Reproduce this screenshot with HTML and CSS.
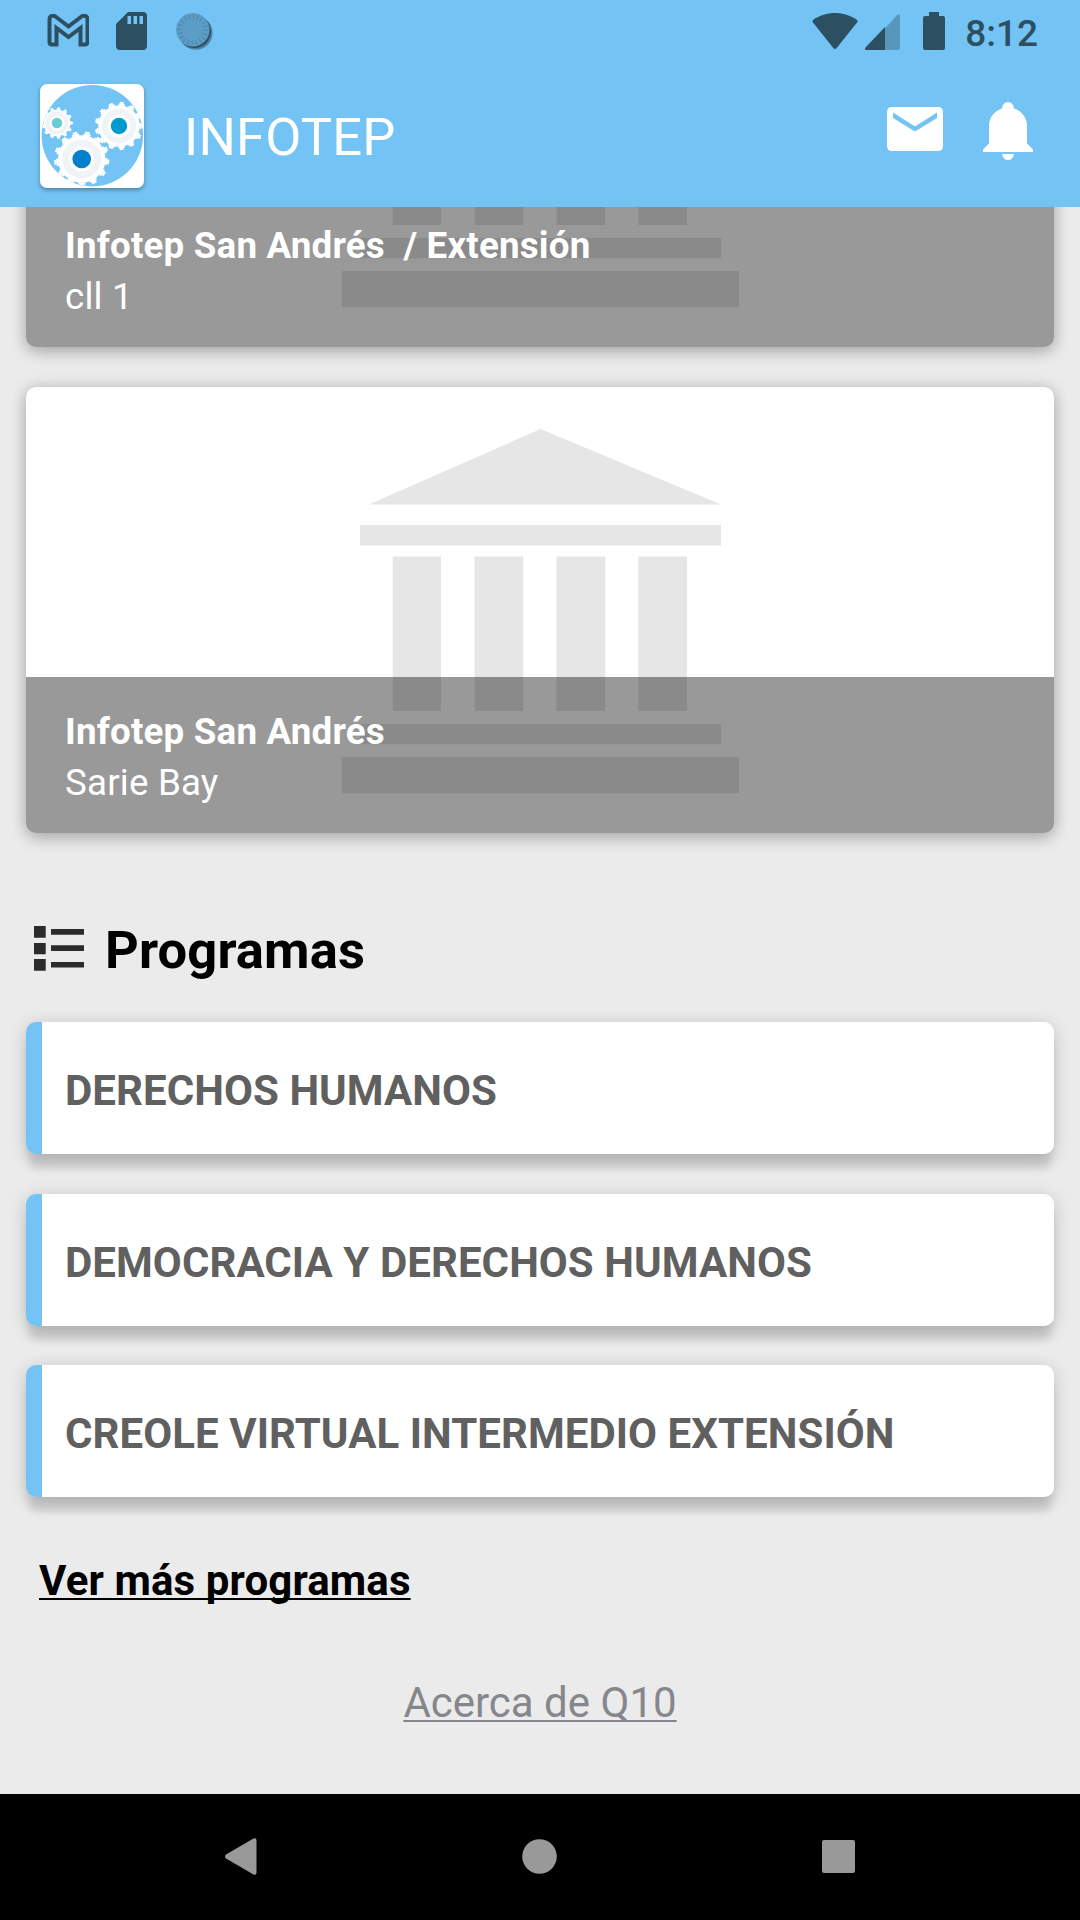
FILE: index.html
```html
<!DOCTYPE html>
<html lang="es">

<head>
    <meta charset="UTF-8">
    <meta name="viewport" content="width=device-width, initial-scale=1.0">
    <title>INFOTEP</title>
    <link rel="stylesheet" href="styles.css">
</head>

<body>
    <header class="header">
        <div class="statusBar">
            <div class="statusGroup">
                <svg class="iconMail" width="42" height="33" viewBox="-0.5 0 42 33">
                    <path d="M2 5.500V28q0 2.500 2.500 2.500h4.500V14L21 23l12-9V30.500H37.500q2.500 0 2.500-2.500V5.500C40 1.500 36 1 34 2.500L21 12.500 8 2.500C6 1 2 1.500 2 5.500z" fill="none" stroke="#2d4f62" stroke-width="4" />
                </svg>
                <svg class="iconCard" width="31" height="38" viewBox="0 0 31 38">
                    <path fill="#2d4f62" fill-rule="evenodd" d="M12 0h15q4 0 4 4v30q0 4-4 4H4q-4 0-4-4V12zM11.500 4v8H15V4zM17.500 4v8H21V4zM23.500 4v8H27V4z" />
                </svg>
                <svg class="iconSync" width="38" height="38" viewBox="0 0 38 38">
                    <circle cx="19.800" cy="20" r="16.800" fill="#4c84a8" />
                    <circle cx="18.500" cy="18.500" r="16.500" fill="#2d4f62" />
                    <circle cx="16.800" cy="16.800" r="16.700" fill="#5c9dc6" />
                    <circle cx="16.800" cy="16.800" r="13" fill="none" stroke="#4d89ae" stroke-width="5" stroke-dasharray="2.800 7.200" pathLength="200" />
                </svg>
            </div>
            <div class="statusGroup">
                <svg class="iconWifi" width="46" height="37" viewBox="0 0 46 37">
                    <path fill="#2d4f62" d="M1 7C14-2.300 32-2.300 45 7q1 1 .2 2.200L24.500 35.300q-1.500 1.600-3 0L.8 9.200Q0 8 1 7z" />
                </svg>
                <svg class="iconSignal" width="35" height="36" viewBox="0 0 35 36">
                    <path fill="#5896bc" d="M20 14.500L32 1q3-2 3 1.500V34q0 2-2 2H20z" />
                    <path fill="#2d4f62" d="M20 13v23H1.500q-2.500-.5-1-2.500z" />
                </svg>
                <svg class="iconBattery" width="22" height="38" viewBox="0 0 22 38">
                    <path fill="#2d4f62" d="M6 0h10v4h4q2 0 2 2v30q0 2-2 2H2q-2 0-2-2V6q0-2 2-2h4z" />
                </svg>
                <span class="clock">8:12</span>
            </div>
        </div>
        <div class="toolbar">
            <svg class="logo" width="104" height="104" viewBox="0 0 104 104">
                <defs>
                    <clipPath id="disc">
                        <circle cx="52.300" cy="51.700" r="50.700" />
                    </clipPath>
                </defs>
                <circle cx="52.300" cy="51.700" r="50.700" fill="#73c4f4" />
                <!-- engranajes: cada diente son dos trazos, base ancha y punta estrecha -->
                <g clip-path="url(#disc)">
                    <g transform="translate(17 39)">
                        <circle r="13.200" fill="#fff" />
                        <circle class="tooth" r="13.800" stroke-width="1.600" stroke-dasharray="6 4" stroke-dashoffset="3" pathLength="130" />
                        <circle class="tooth" r="15.100" stroke-width="1.600" stroke-dasharray="3.600 6.400" stroke-dashoffset="1.800" pathLength="130" />
                        <circle r="11.500" fill="#f0f4f6" />
                        <circle r="7.500" fill="#fff" />
                        <circle r="5.300" fill="#69cdd3" />
                    </g>
                    <g transform="translate(79 42)">
                        <circle r="20.800" fill="#fff" />
                        <circle class="tooth" r="21.500" stroke-width="2" stroke-dasharray="6 4" stroke-dashoffset="3" pathLength="130" />
                        <circle class="tooth" r="23.200" stroke-width="2" stroke-dasharray="3.600 6.400" stroke-dashoffset="1.800" pathLength="130" />
                        <circle r="17.200" fill="#f0f4f6" />
                        <circle r="11.300" fill="#fff" />
                        <circle r="8.200" fill="#039bcf" />
                    </g>
                    <g transform="translate(41.700 75)">
                        <g transform="rotate(6)">
                            <circle r="23.800" fill="#fff" />
                            <circle class="tooth" r="24.600" stroke-width="2.200" stroke-dasharray="6 4" stroke-dashoffset="3" pathLength="130" />
                            <circle class="tooth" r="26.600" stroke-width="2.200" stroke-dasharray="3.600 6.400" stroke-dashoffset="1.800" pathLength="130" />
                        </g>
                        <circle r="19.500" fill="#f0f4f6" />
                        <circle r="12.500" fill="#fff" />
                        <circle r="9.300" fill="#0380cc" />
                    </g>
                </g>
            </svg>
            <h1 class="title">INFOTEP</h1>
            <svg class="iconInbox" width="56" height="44" viewBox="0 0 56 44">
                <path fill="#fff" fill-rule="evenodd" d="M5 0h46q5 0 5 5v34q0 5-5 5H5q-5 0-5-5V5q0-5 5-5zM6 5.500v5.500l22 13.500 22-13.500V5.500l-22 14z" />
            </svg>
            <svg class="iconBell" width="50" height="58" viewBox="0 0 50 58">
                <path fill="#fff" d="M25 0q5 0 6 6.500C39 9 44 16 44 24v17.500l6 6V50H0v-2.500l6-6V24C6 16 11 9 19 6.500Q20 0 25 0zM19 52h12q-1 6-6 6t-6-6z" />
            </svg>
        </div>
    </header>

    <main class="content">
        <div class="card">
            <svg class="building" width="397" height="366" viewBox="0 0 397 366">
                <path fill="#e6e6e6" d="M198.500 1L379 76.600H27zM18 97h361v20.500H18zM50.700 128.500H99V283H50.700zM132.500 128.500h48.700V283h-48.700zM214.500 128.500h48.700V283h-48.700zM296.300 128.500H345V283h-48.700zM18 296h361v20.300H18zM0 329h397v36.300H0z" />
            </svg>
            <div class="caption">
                <b>Infotep San Andrés&nbsp; / Extensión</b>
                <span>cll 1</span>
            </div>
        </div>
        <div class="card">
            <svg class="building" width="397" height="366" viewBox="0 0 397 366">
                <path fill="#e6e6e6" d="M198.500 1L379 76.600H27zM18 97h361v20.500H18zM50.700 128.500H99V283H50.700zM132.500 128.500h48.700V283h-48.700zM214.500 128.500h48.700V283h-48.700zM296.300 128.500H345V283h-48.700zM18 296h361v20.300H18zM0 329h397v36.300H0z" />
            </svg>
            <div class="caption">
                <b>Infotep San Andrés</b>
                <span>Sarie Bay</span>
            </div>
        </div>

        <div class="sectionTitle">
            <svg width="50" height="45" viewBox="0 0 50 45">
                <path fill="#2b2b2b" d="M0 0h11.700v11.700H0zM0 17h11.700v11.300H0zM0 33h11.700v11.700H0zM17 3h33v5.700H17zM17 19.300h33V25H17zM17 36h33v5.500H17z" />
            </svg>
            <h2>Programas</h2>
        </div>

        <div class="programs">
            <div class="program">DERECHOS HUMANOS</div>
            <div class="program">DEMOCRACIA Y DERECHOS HUMANOS</div>
            <div class="program">CREOLE VIRTUAL INTERMEDIO EXTENSIÓN</div>
        </div>

        <a class="more">Ver más programas</a>
        <a class="about">Acerca de Q10</a>
    </main>

    <nav class="navBar">
        <svg width="32" height="37" viewBox="0 0 32 37">
            <path fill="#999" d="M1 16.500L28.500.6Q31.500-.5 31.500 2.500v32q0 3-3 1.900L1 20.500q-2-2 0-4z" />
        </svg>
        <svg width="35" height="35" viewBox="0 0 35 35">
            <circle cx="17.500" cy="17.500" r="17.300" fill="#999" />
        </svg>
        <svg width="33" height="33" viewBox="0 0 33 33">
            <rect width="33" height="33" rx="2" fill="#999" />
        </svg>
    </nav>
</body>

</html>
```
FILE: styles.css
```css
:root {
    --main-color: #73c4f4;
    --status-color: #2d4f62;
}

* {
    box-sizing: border-box;
}

body {
    margin: 0;
    width: 1080px;
    height: 1920px;
    display: flex;
    flex-direction: column;
    overflow: hidden;
    background-color: #ebebeb;
    font-family: Roboto, sans-serif;
}

svg {
    display: block;
    flex: none;
}

.header {
    height: 207px;
    flex: none;
    background-color: var(--main-color);
}

.statusBar {
    height: 63px;
    padding: 12px 42px 0 47px;
    display: flex;
    justify-content: space-between;
}

.statusGroup {
    display: flex;
    align-items: flex-start;
}

.iconMail {
    margin-top: 2px;
}

.iconCard {
    margin-left: 27px;
}

.iconSync {
    margin-left: 29px;
    margin-top: 1px;
}

.iconWifi {
    margin-right: 7px;
    margin-top: 1px;
}

.iconSignal {
    margin-right: 23px;
    margin-top: 2px;
}

.iconBattery {
    margin-right: 20px;
}

.clock {
    color: var(--status-color);
    font-size: 37px;
    font-weight: 500;
    line-height: 44px;
}

.toolbar {
    height: 144px;
    padding: 21px 47px 0 40px;
    display: flex;
    align-items: flex-start;
}

.logo {
    border-radius: 7px;
    background-color: white;
    box-shadow: 0 2px 4px rgba(0, 0, 0, 0.35);
}

.tooth {
    fill: none;
    stroke: white;
}

.title {
    margin: 22px auto 0 40px;
    color: white;
    font-size: 52.5px;
    font-weight: 400;
    line-height: 62px;
    letter-spacing: 0.15px;
}

.iconInbox {
    margin-top: 23px;
    margin-right: 40px;
}

.iconBell {
    margin-top: 18px;
}

/* la lista queda desplazada hasta el final */
.content {
    flex: 1;
    min-height: 0;
    padding: 0 26px 66px;
    display: flex;
    flex-direction: column;
    justify-content: flex-end;
    overflow: hidden;
}

.card {
    height: 446px;
    flex: none;
    margin-bottom: 40px;
    display: grid;
    border-radius: 10px;
    overflow: hidden;
    background-color: white;
    box-shadow: 0 6px 16px rgba(0, 0, 0, 0.2), 0 0 16px rgba(0, 0, 0, 0.14);
}

.building,
.caption {
    grid-area: 1 / 1;
}

.building {
    margin-top: 41px;
    justify-self: center;
}

.caption {
    align-self: end;
    height: 156px;
    padding: 29px 39px 0;
    display: flex;
    flex-direction: column;
    background-color: rgba(0, 0, 0, 0.4);
    color: white;
    font-size: 36.75px;
    line-height: 51px;
    letter-spacing: 0.18px;
}

.sectionTitle {
    margin: 46px 0 41px 8px;
    height: 62px;
    flex: none;
    display: flex;
    align-items: flex-start;
    gap: 21px;
}

.sectionTitle svg {
    margin-top: 7px;
}

.sectionTitle h2 {
    margin: 0;
    font-size: 52.5px;
    line-height: 62px;
    letter-spacing: 0.12px;
}

.programs {
    display: flex;
    flex-direction: column;
    gap: 39.5px;
}

.program {
    height: 132px;
    padding: 44px 39px 0;
    border-radius: 10px;
    background: linear-gradient(to right, var(--main-color) 16px, white 16px);
    box-shadow: 0 16px 8px -2px rgba(0, 0, 0, 0.13), 0 3px 18px rgba(0, 0, 0, 0.18);
    color: #606060;
    font-size: 42px;
    font-weight: bold;
    line-height: 50px;
    letter-spacing: 0.06px;
}

.more,
.about {
    font-size: 42px;
    line-height: 50px;
    text-decoration: underline;
    text-decoration-thickness: 2px;
    text-decoration-skip-ink: none;
    text-underline-offset: 3px;
}

.more {
    margin: 59px 0 72px 13px;
    align-self: flex-start;
    color: black;
    font-weight: bold;
    letter-spacing: 0.12px;
}

.about {
    align-self: center;
    color: #86878c;
}

.navBar {
    height: 126px;
    flex: none;
    padding: 0 225px 2px;
    display: flex;
    align-items: center;
    justify-content: space-between;
    background-color: black;
}
```
